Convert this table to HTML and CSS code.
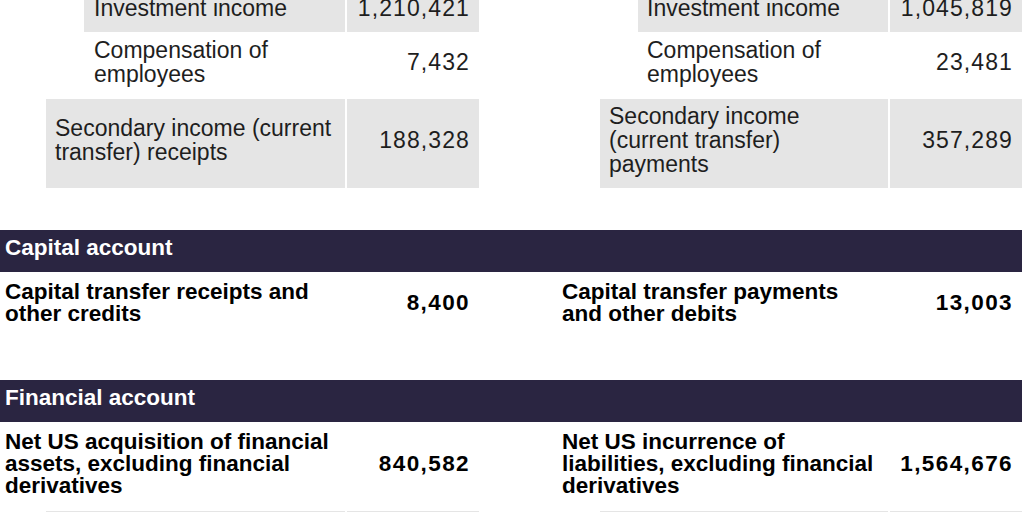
FILE: index.html
```html
<!DOCTYPE html>
<html lang="en">
<head>
<meta charset="utf-8">
<title>US international transactions</title>
<link rel="stylesheet" href="styles.css">
</head>
<body>
<main class="sheet">
  <section class="block block--top">
    <div class="line">
      <div class="row row--l2 row--shaded">
        <div class="label">Investment income</div>
        <div class="value">1,210,421</div>
      </div>
      <div class="row row--l2 row--shaded">
        <div class="label">Investment income</div>
        <div class="value">1,045,819</div>
      </div>
    </div>
    <div class="line">
      <div class="row row--l2">
        <div class="label">Compensation of employees</div>
        <div class="value">7,432</div>
      </div>
      <div class="row row--l2">
        <div class="label">Compensation of employees</div>
        <div class="value">23,481</div>
      </div>
    </div>
    <div class="line">
      <div class="row row--l1 row--shaded">
        <div class="label">Secondary income (current transfer) receipts</div>
        <div class="value">188,328</div>
      </div>
      <div class="row row--l1 row--shaded">
        <div class="label">Secondary income (current transfer) payments</div>
        <div class="value">357,289</div>
      </div>
    </div>
  </section>

  <h2 class="band">Capital account</h2>
  <section class="block">
    <div class="line">
      <div class="row row--major">
        <div class="label">Capital transfer receipts and other credits</div>
        <div class="value">8,400</div>
      </div>
      <div class="row row--major">
        <div class="label">Capital transfer payments and other debits</div>
        <div class="value">13,003</div>
      </div>
    </div>
  </section>

  <h2 class="band">Financial account</h2>
  <section class="block">
    <div class="line">
      <div class="row row--major">
        <div class="label">Net US acquisition of financial assets, excluding financial derivatives</div>
        <div class="value">840,582</div>
      </div>
      <div class="row row--major">
        <div class="label">Net US incurrence of liabilities, excluding financial derivatives</div>
        <div class="value">1,564,676</div>
      </div>
    </div>
    <div class="line">
      <div class="row row--l1 row--shaded">
        <div class="label">Direct investment assets</div>
        <div class="value">&nbsp;</div>
      </div>
      <div class="row row--l1 row--shaded">
        <div class="label">Direct investment liabilities</div>
        <div class="value">&nbsp;</div>
      </div>
    </div>
  </section>
</main>
</body>
</html>
```

FILE: styles.css
```css
html, body {
  margin: 0;
  padding: 0;
  background: #ffffff;
  overflow: hidden;
}

.sheet {
  width: 1022px;
  font-family: "Liberation Sans", Arial, sans-serif;
  color: #1e1e1e;
}

.block {
  display: flex;
  flex-direction: column;
  row-gap: 1px;
}

.block--top {
  margin-top: -9px;
}

.line {
  display: grid;
  grid-template-columns: 479px 469px;
  column-gap: 74px;
}

.row {
  display: flex;
  column-gap: 2px;
}

.label {
  flex: 1;
  min-width: 0;
  display: flex;
  align-items: center;
  font-size: 23px;
  line-height: 24px;
  padding: 5px 9px 12px 9px;
}

.value {
  width: 132px;
  box-sizing: border-box;
  display: flex;
  align-items: center;
  justify-content: flex-end;
  font-size: 23px;
  line-height: 24px;
  letter-spacing: 1.1px;
  padding: 5px 9px 12px 4px;
}

.row--shaded .label,
.row--shaded .value {
  background: #e5e5e5;
}

.line > .row:first-child.row--l1 { margin-left: 46px; }
.line > .row:last-child.row--l1 { margin-left: 47px; }
.line > .row:first-child.row--l2 { margin-left: 84px; }
.line > .row:first-child.row--l2 .label { padding-left: 10px; }
.line > .row:last-child.row--l2 { margin-left: 85px; }

.row--major .label,
.row--major .value {
  font-weight: 700;
  font-size: 22.5px;
  line-height: 22px;
  color: #000000;
  padding-top: 9px;
  padding-bottom: 13px;
}

.row--major .value {
  letter-spacing: 1.4px;
}

.line > .row:first-child.row--major .label {
  padding-left: 5px;
}

.band {
  margin: 42px 0 0 0;
  background: #2a2541;
  color: #ffffff;
  font-weight: 700;
  font-size: 22.5px;
  line-height: 22px;
  padding: 7px 5px 13px 5px;
}
```
